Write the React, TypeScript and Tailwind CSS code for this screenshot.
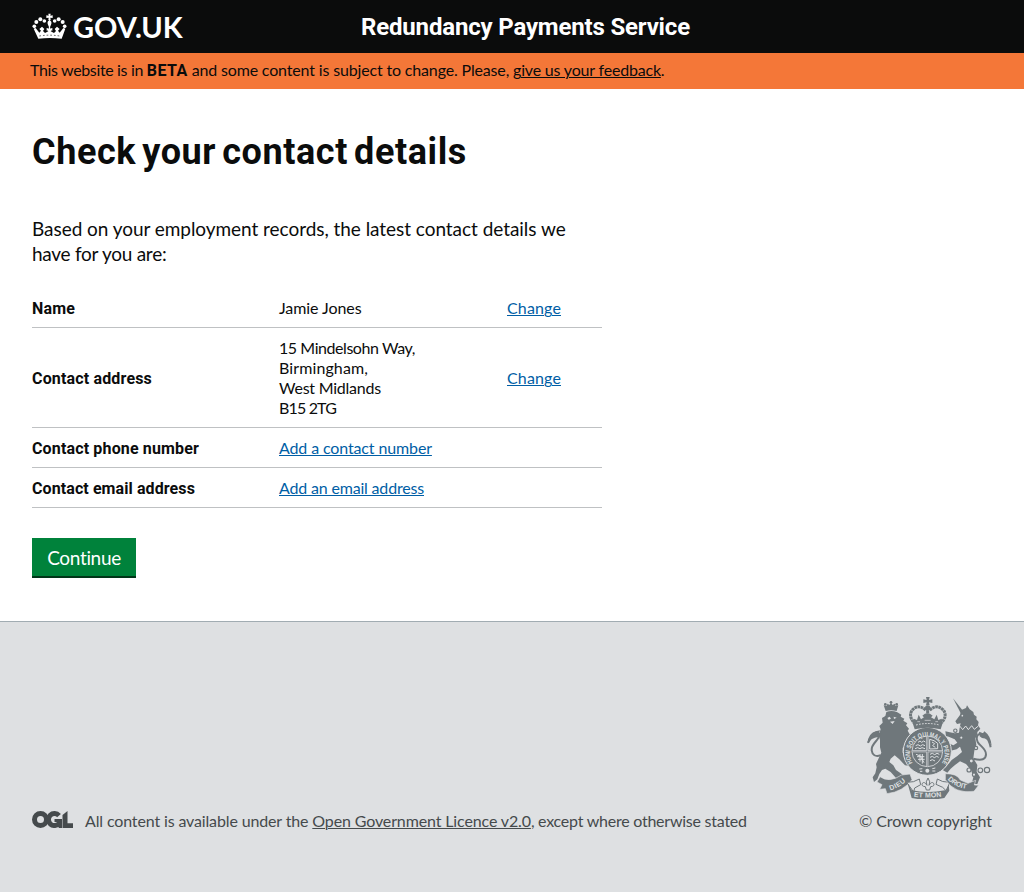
import React from "react";

function CrownLogo() {
  return (
    <svg width="35" height="27" viewBox="36 37 105 81" fill="#fff" aria-hidden="true">
      <path d="M85 39h7l-1 6 7-1v8l-7-1 1 7h-7l1-7-7 1v-8l7 1z" />
      <path d="M88.500 57q7 5 6 10-1 5-3 9h-6q-2-4-3-9-1-5 6-10z" />
      <circle cx="73" cy="61" r="5.500" />
      <circle cx="61" cy="56" r="6" />
      <circle cx="49" cy="64" r="6" />
      <circle cx="43" cy="77" r="5.500" />
      <circle cx="104" cy="61" r="5.500" />
      <circle cx="116" cy="56" r="6" />
      <circle cx="128" cy="64" r="6" />
      <circle cx="134" cy="77" r="5.500" />
      <path d="M41 84l6-2 11 14 5-6-5-5 8-7 7 7-4 6 6 6 10-5-5-8h17l-5 8 10 5 6-6-4-6 7-7 8 7-5 5 5 6 11-14 6 2-11 30q-36-4-70 0z" />
      <path d="M86 76h5l-1 8 7-2v8l-7-2 1 11h-5l1-11-7 2v-8l7 2z" />
      <path d="M58 106q30-5 61 0" fill="none" stroke="#0b0c0c" strokeWidth="2" strokeDasharray="5 6" />
    </svg>
  );
}

function OglLogo() {
  return (
    <svg width="41" height="17" viewBox="0 0 41 17" fill="none" stroke="#454a4c" aria-hidden="true">
      <circle cx="8.500" cy="8.500" r="6" strokeWidth="5" />
      <path d="M27 4.600A6 6 0 1 0 27.200 12.200" strokeWidth="5" />
      <path d="M22.500 8H30V17H27L25 14V11H22.500z" fill="#454a4c" stroke="none" />
      <path d="M30.500 4L35.500 0V12.300H41V17H30.500z" fill="#454a4c" stroke="none" />
    </svg>
  );
}

function RoyalArms() {
  return (
    <svg width="125" height="102" viewBox="21 21 375 306" fill="#6f777b" aria-hidden="true">
      <defs>
        <path id="garter" d="M158 219A52 52 0 1 1 246 219" />
        <path id="dieu" d="M91 301Q118 294 140 271" />
        <path id="etmon" d="M161 320Q205 326 249 319" />
        <path id="droit" d="M263 268Q285 293 322 297" />
      </defs>

      {/* lion */}
      <path d="M77 63L71 46l8 2 4-7 5 4 5-7 5 7 6-4 3 7 8-2-5 17q-17-5-33 0z" />
      <circle cx="93" cy="37" r="4" />
      <circle cx="76" cy="43" r="4" />
      <circle cx="110" cy="43" r="4" />
      <path d="M79 66Q95 60 112 67L124 74 122 80 133 86 130 92 142 100 138 106 147 116 143 122 150 134 146 142 154 150 150 160 138 163 128 174 128 188 138 205 150 215 150 228 135 226 118 208 104 196 92 206 88 216 100 226 108 240 122 250 132 258 126 268 108 264 92 246 76 236 66 240 58 252 52 268 42 276 38 262 46 250 50 232 48 222 56 205 64 188 60 172 60 150 56 135 62 118 58 108 68 98 66 84 76 78z" />
      <path d="M82 84l7-4 4 6-7 3zM101 80l9 3-8 4zM90 95l14-2-6 9z" fill="#dee0e2" />
      <path d="M62 196Q38 203 35 181C33 158 61 151 57 132Q53 124 42 130Q34 140 24 158" fill="none" stroke="#6f777b" strokeWidth="6" />
      <path d="M22 160q3-30 25-36l13-3-3 8 9 3-12 9q-20 2-32 19z" />

      {/* unicorn */}
      <path d="M279 25l32 40-8 6z" />
      <path d="M300 75L304 60 318 54 321 46 329 58 340 66 342 74 350 80 349 88 356 96 354 106 361 116 352 126 352 134 346 145 349 165 343 182 340 205 352 225 350 245 360 262 352 282 335 282 340 262 333 240 318 222 300 214 285 225 272 236 262 248 248 240 262 226 275 210 292 198 306 186 300 170 290 178 272 182 262 172 256 165 266 160 280 166 292 158 284 148 266 140 258 138 256 124 266 126 284 130 297 128 299 112 302 100 291 102 286 94z" />
      <circle cx="307" cy="77" r="2.500" fill="#dee0e2" />
      <path d="M292 118l8-9 8 10 9-11 8 11 10-12 8 11 12-10" fill="none" stroke="#dee0e2" strokeWidth="3" />
      <path d="M340 206Q378 216 378 193C379 170 344 164 351 139Q358 124 376 137Q386 145 392 172" fill="none" stroke="#6f777b" strokeWidth="6" />
      <path d="M359 139l-2-14 12 5 4-6q20 14 22 44-10-23-29-24z" />
      <g fill="#dee0e2" stroke="#6f777b" strokeWidth="3.500">
        <circle cx="286" cy="122" r="5" />
        <circle cx="304" cy="143" r="5" />
        <circle cx="348" cy="174" r="5" />
        <circle cx="334" cy="213" r="6" />
        <circle cx="327" cy="240" r="6" />
        <circle cx="342" cy="254" r="5" />
        <circle cx="361" cy="241" r="7" />
        <circle cx="381" cy="240" r="8" />
      </g>

      {/* shield and garter */}
      <circle cx="202" cy="184" r="72" stroke="#dee0e2" strokeWidth="3" />
      <circle cx="202" cy="184" r="46" fill="#6f777b" stroke="#dee0e2" strokeWidth="2.500" />
      <path d="M202 139v90M157 184h90" stroke="#dee0e2" strokeWidth="6" />
      <path d="M202 139v90M157 184h90" stroke="#6f777b" strokeWidth="2" />
      <g fill="none" stroke="#dee0e2" strokeWidth="3">
        <path d="M174 157l6-4 5 4 6-4 5 3M167 167l7-3 7 4 7-4 7 3M165 176l8-3 7 3 6-3 9 3" />
        <path d="M168 193l13 5 11 20M171 200h22M174 208h20M180 192v23M187 192v29" />
        <path d="M209 148l13 4 11 8v16l-24 1zM216 156l8 5-6 6 8 5" />
        <path d="M210 193l7-3 7 4 7-4 7 3M210 202l7-3 6 4 7-4 6 3M210 212l7-3 8 4" />
      </g>
      <text fill="#dee0e2" fontFamily="Liberation Sans" fontWeight="bold" fontSize="20">
        <textPath href="#garter" textLength="222" lengthAdjust="spacingAndGlyphs">HONI SOIT QUI MAL Y PENSE</textPath>
      </text>
      <circle cx="202" cy="242" r="6" fill="#dee0e2" />
      <path d="M178 237l9-1M217 236l9-2M180 244l7 0M217 243l9 0" stroke="#dee0e2" strokeWidth="3" />

      {/* crown */}
      <path d="M198 21h11l-2 9 10-2v11l-10-2 2 9h-11l2-9-10 2V28l10 2z" />
      <circle cx="203" cy="54" r="8" />
      <g fill="none" stroke="#6f777b" strokeWidth="9" strokeDasharray="8 1.500">
        <path d="M197 60Q175 41 157 60Q144 77 162 98M209 60Q231 41 250 60Q263 77 245 98" />
        <path d="M203 61v24" />
      </g>
      <path d="M158 99l3-13 10 4 5-16 7 14 9-6-5-5q15-14 31 0l-5 5 10 6 7-14 5 16 10-4 3 13-6 19q-39-9-78 0z" />
      <path d="M168 105q36-9 70 0" fill="none" stroke="#dee0e2" strokeWidth="3" strokeDasharray="5 4" />
      <path d="M172 95h8M194 91h18M226 95h8" stroke="#dee0e2" strokeWidth="2" />

      {/* motto ribbon */}
      <path d="M60 260q27 20 65-5l25-3 6 17q-28 37-75 42l-5-15-17 2 7-14-15-8z" stroke="#dee0e2" strokeWidth="2" />
      <path d="M140 277q22 1 38-10l4 17-18 10-3 12z" fill="#dee0e2" stroke="#6f777b" strokeWidth="3" />
      <path d="M142 277l13 24q50 10 100 0l10-24 3 25-15 22q-49 10-98 0z" />
      <path d="M232 267q13 10 38 10l-12 25-10-10-20-9z" fill="#dee0e2" stroke="#6f777b" strokeWidth="3" />
      <path d="M256 251q35-1 45 19l23 10 23-9-4 14 13 1-14 18q-57 9-86-35z" stroke="#dee0e2" strokeWidth="2" />
      <path d="M204 264q9 12 3 22 8-13 14-6 4 9-9 10l-3 10h-10l-3-10q-13-1-9-10 6-7 14 6-6-10 3-22z" fill="#dee0e2" stroke="#6f777b" strokeWidth="3" />
      <g fill="#dee0e2" fontFamily="Liberation Sans" fontWeight="bold" fontSize="21">
        <text>
          <textPath href="#dieu" textLength="54">DIEU</textPath>
        </text>
        <text>
          <textPath href="#etmon" textLength="84">ET MON</textPath>
        </text>
        <text>
          <textPath href="#droit" textLength="64">DROIT</textPath>
        </text>
      </g>
    </svg>
  );
}

const bold = "font-['Roboto',sans-serif] font-bold";
const underline = "underline decoration-1 underline-offset-1";
const link = `text-[#005ea5] ${underline}`;

function Row({ label, labelClass, children, change }: {
  label: string;
  labelClass: string;
  children: React.ReactNode;
  change?: boolean;
}) {
  return (
    <div className="grid grid-cols-[247px_228px_1fr] items-center border-b border-[#bfc1c3] pt-2.5 pb-[9px] leading-5">
      <dt className={`${bold} pt-px -mb-px ${labelClass}`}>{label}</dt>
      <dd>{children}</dd>
      <dd>{change && <a href="#" className={`${link} tracking-[0.14px]`}>Change</a>}</dd>
    </div>
  );
}

export default function App() {
  return (
    <div className="flex min-h-screen flex-col bg-white font-['Lato',sans-serif] text-base text-[#0b0c0c]">
      <header className="flex h-[53px] items-center bg-[#0b0c0c] px-8 text-white">
        <a href="#" className="flex w-[329px] items-center">
          <CrownLogo />
          <span className="ml-1.5 text-[29px] leading-none font-bold">GOV.UK</span>
        </a>
        <span className={`${bold} text-2xl tracking-[-0.170px]`}>Redundancy Payments Service</span>
      </header>

      <div className="h-9 bg-[#f47738] px-[30px] leading-[34px] whitespace-pre">
        <span className="tracking-[-0.350px]">This website is in </span>
        <strong className={`${bold} tracking-[0.450px]`}>BETA</strong>
        <span className="tracking-[-0.160px]"> and some content is subject to change. Please, </span>
        <a href="#" className={`tracking-[-0.190px] ${underline}`}>give us your feedback</a>.
      </div>

      <main className="h-[532px] px-8 pt-[43px]">
        <h1 className={`${bold} text-4xl leading-10 tracking-[0.600px] [word-spacing:-3.500px]`}>Check your contact details</h1>
        <p className="mt-11 text-[19px] leading-[25px]">
          <span className="block tracking-[-0.045px]">Based on your employment records, the latest contact details we</span>
          <span className="block tracking-[-0.260px]">have for you are:</span>
        </p>
        <dl className="mt-[22px] w-[570px]">
          <Row label="Name" labelClass="tracking-[0.160px]" change>
            <span className="tracking-[-0.070px]">Jamie Jones</span>
          </Row>
          <Row label="Contact address" labelClass="tracking-[0.160px]" change>
            <span className="block tracking-[-0.440px]">15 Mindelsohn Way,</span>
            <span className="block tracking-[0.110px]">Birmingham,</span>
            <span className="block tracking-[-0.230px]">West Midlands</span>
            <span className="block tracking-[-0.840px]">B15 2TG</span>
          </Row>
          <Row label="Contact phone number" labelClass="tracking-[0.150px]">
            <a href="#" className={`${link} tracking-[-0.130px]`}>Add a contact number</a>
          </Row>
          <Row label="Contact email address" labelClass="tracking-[0.090px]">
            <a href="#" className={`${link} tracking-[-0.180px]`}>Add an email address</a>
          </Row>
        </dl>
        <button className="mt-[30px] h-10 w-[104px] border-b-2 border-[#003618] bg-[#00823b] pt-0.5 text-[19px] tracking-[-0.330px] text-white">Continue</button>
      </main>

      <footer className="flex grow justify-between border-t border-[#a1acb2] bg-[#dee0e2] px-8 text-[#454a4c]">
        <div className="flex items-start pt-[187px]">
          <div className="pt-0.5">
            <OglLogo />
          </div>
          <p className="ml-3 leading-6 whitespace-pre">
            <span className="tracking-[-0.140px]">All content is available under the </span>
            <a href="#" className={`tracking-[-0.130px] ${underline}`}>Open Government Licence v2.0</a>
            <span className="tracking-[-0.240px]">, except where otherwise stated</span>
          </p>
        </div>
        <div className="flex flex-col items-end pt-[75px]">
          <RoyalArms />
          <a href="#" className="mt-2.5 leading-6 tracking-[-0.070px]">© Crown copyright</a>
        </div>
      </footer>
    </div>
  );
}
